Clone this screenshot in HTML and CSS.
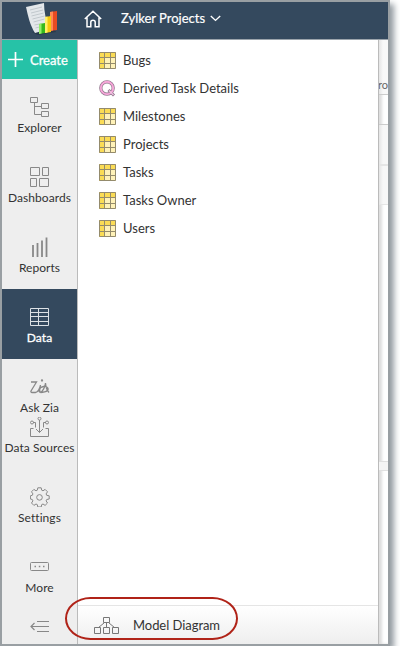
FILE: index.html
```
<!DOCTYPE html>
<html lang="en">

<head>
    <meta charset="utf-8">
    <meta name="viewport" content="width=device-width, initial-scale=1.0">
    <title>Zylker Projects</title>
    <link rel="stylesheet" href="styles.css">
</head>

<body>
    <!-- shared icon for the table rows -->
    <svg class="symbols" width="0" height="0">
        <symbol id="table" viewBox="0 0 17 17">
            <path fill="#fff2b8" d="M0 0h17v17H0z" />
            <path fill="#fbdc55" d="M0 0h17v6H0zM0 6h6v11H0z" />
            <path fill="none" stroke="#948b6c" d="M.5 .5h16v16H.5zM5.5 1v15M11.5 1v15M1 5.5h15M1 11.5h15" />
        </symbol>
    </svg>

    <div class="window">
        <header class="topbar">
            <svg class="logo" width="34" height="34" viewBox="0 0 34 34">
                <path fill="#1f3040" opacity=".6" d="M7 29l6 3 18-3-2-4z" />
                <path fill="#e3e7ea" d="M1 4L19 0c0 9 2 17 5 26L10 30C5 22 3 13 1 4z" />
                <path fill="none" stroke="#b9c0c5" stroke-width=".8" d="M5 7l12-3M6 10l12-3M6.500 13l12-3M7.500 16l12-3M8.500 19l11-3M9.500 22l5-1M10.500 25l4-1" />
                <path fill="#e94b22" d="M25 9l7-1v19l-7 1z" />
                <path fill="#ff8a55" d="M25 9l3-.5v19L25 28z" />
                <path fill="#f5c80e" d="M20 14l6-1v16l-6 1z" />
                <path fill="#fff06a" d="M20 14l2.500-.4v16L20 30z" />
                <path fill="#35b91c" d="M14 21l6-1v10l-6 1z" />
                <path fill="#93ed6a" d="M14 21l2.500-.4v10L14 31z" />
            </svg>
            <svg class="home" width="18" height="18" viewBox="0 0 18 18">
                <path d="M.8 9L9 1.200 17.200 9M3 7.500v9.200h3.800v-4.500c0-2.500 4.400-2.500 4.400 0v4.500H15V7.500" />
            </svg>
            <span class="project">Zylker Projects</span>
            <svg class="arrow" width="11" height="7" viewBox="0 0 11 7">
                <path d="M.8 .9l4.700 4.500L10.200 .9" />
            </svg>
        </header>

        <div class="main">
            <nav class="sidebar">
                <button class="create">
                    <svg width="15" height="15" viewBox="0 0 15 15"><path d="M7.500 0v15M0 7.500h15" /></svg>
                    <span>Create</span>
                </button>
                <a class="item">
                    <svg viewBox="0 0 20 20"><path d="M.5 .5h7v5h-7zM11.500 6.500h7v5h-7zM11.500 14.500h7v5h-7zM4.500 6v11.500h7M4.500 9.500h7" /></svg>
                    <span>Explorer</span>
                </a>
                <a class="item">
                    <svg viewBox="0 0 20 20"><path d="M.5 .5h9v8h-9zM12.500 .5h6v8h-6zM.5 11.500h6v8h-6zM9.500 11.500h9v8h-9z" /></svg>
                    <span>Dashboards</span>
                </a>
                <a class="item reports">
                    <svg viewBox="0 0 20 20"><path d="M3 8v12M7.500 6v14M12 3.500V20M16.500 .5V20" /></svg>
                    <span>Reports</span>
                </a>
                <a class="item selected">
                    <svg viewBox="0 0 20 20"><path d="M.5 1.500h18v17h-18zM.5 5.500h18M.5 9.500h18M.5 14.500h18M8.500 1.500v17" /></svg>
                    <span>Data</span>
                </a>
                <a class="item short">
                    <svg class="zia" viewBox="0 0 20 20"><path d="M1 5H6.500L1 14c-.4 1 .3 1.500 1 1.500H5.500C8 15.500 10 11 10.500 8c-.5 3-1.500 5.500-.3 7 1.800 1 5.300-5.500 5.300-9 .3 4 1 7 3.500 9.500M10.500 15.500c-3-1-1-5.500 3-6 3-.3 5 1.500 4.500 3-1 3-4.500 2.500-7.500 3" /><circle cx="12" cy="3.500" r=".5" /></svg>
                    <span>Ask Zia</span>
                </a>
                <a class="item">
                    <svg viewBox="0 0 20 20"><path d="M3.500 11.500H.5v8h18v-8h-3M9.500 3v12.500M6 12l3.500 3.500L13 12M3 5.500h2.500v5M16 5.500h-2.500v5" /><circle cx="9.500" cy="1.600" r="1.500" /><circle cx="2" cy="5.500" r="1.500" /><circle cx="17" cy="5.500" r="1.500" /></svg>
                    <span>Data Sources</span>
                </a>
                <a class="item">
                    <svg viewBox="0 0 20 20"><path d="M7.800 .8h3.400l.5 2.400 1.300.6 2.100-1.400 2.400 2.400-1.400 2.100.6 1.400 2.500.5v3.200l-2.500.5-.6 1.400 1.400 2.100-2.400 2.400-2.100-1.400-1.300.6-.5 2.400H7.800l-.5-2.400-1.300-.6-2.100 1.400-2.400-2.400 1.400-2.100-.6-1.400L.4 12V8.800l1.900-.5.6-1.400-1.400-2.100 2.400-2.400L6 3.800l1.300-.6z" /><circle cx="9.500" cy="10.400" r="2.800" /></svg>
                    <span>Settings</span>
                </a>
                <a class="item">
                    <svg viewBox="0 0 20 20"><rect x=".5" y="5.500" width="18" height="8" rx="1" /><path class="dots" d="M4.500 9.500h1.500M8.800 9.500h1.500M13 9.500h1.500" /></svg>
                    <span>More</span>
                </a>
                <a class="collapse">
                    <svg width="20" height="14" viewBox="0 0 20 14"><path d="M7 1.500h12M1 6.500h18M7 11.500h12M4.500 3L1 6.500 4.500 10" /></svg>
                </a>
            </nav>

            <section class="panel">
                <ul class="tables">
                    <li><svg><use href="#table" /></svg><span>Bugs</span></li>
                    <li class="query">
                        <svg viewBox="0 0 17 17">
                            <circle cx="8" cy="8" r="6.200" stroke="#8c7288" stroke-width="3.200" />
                            <path stroke="#8c7288" stroke-width="2.800" d="M9.500 10l5.500 5.500" />
                            <circle cx="8" cy="8" r="6.200" stroke="#f5a6d8" stroke-width="2" />
                            <path stroke="#f5c6e4" stroke-width="1.200" d="M10 10.500l4.500 4.500" />
                        </svg>
                        <span>Derived Task Details</span>
                    </li>
                    <li><svg><use href="#table" /></svg><span>Milestones</span></li>
                    <li><svg><use href="#table" /></svg><span>Projects</span></li>
                    <li><svg><use href="#table" /></svg><span>Tasks</span></li>
                    <li><svg><use href="#table" /></svg><span>Tasks Owner</span></li>
                    <li><svg><use href="#table" /></svg><span>Users</span></li>
                </ul>
                <div class="model">
                    <svg width="26" height="17" viewBox="0 0 26 17"><path d="M9.500 .5h6v5h-6zM.5 10.500h6v6h-6zM9.500 10.500h6v6h-6zM18.500 10.500h6v6h-6zM12.500 6v4M10 6l-5.500 4.500M15 6l5.500 4.500" /></svg>
                    <span>Model Diagram</span>
                </div>
            </section>

            <!-- page behind the panel -->
            <aside class="behind">
                <div class="heading">ro</div>
                <div class="field"></div>
                <div class="tools"></div>
                <div class="columns"></div>
                <div class="rows"></div>
                <div class="splitter"></div>
            </aside>
        </div>
        <div class="highlight"></div>
    </div>
</body>

</html>
```
FILE: styles.css
```
* {
    box-sizing: border-box;
}

body {
    margin: 0;
    background-color: #fff;
    font-family: Lato, "Liberation Sans", sans-serif;
    font-size: 13px;
    font-variant-ligatures: none;
    color: #333;
}

svg {
    flex: none;
    fill: none;
}

.symbols {
    position: absolute;
}

.window {
    position: relative;
    display: flex;
    flex-direction: column;
    width: 390px;
    height: 646px;
    border: 2px solid #999fa3;
    box-shadow: 4px 4px 6px #939ba1;
}

.topbar {
    display: flex;
    align-items: center;
    height: 38px;
    background-color: #34495e;
    border-bottom: 1px solid #9ba4ac;
    color: #fff;
}

.logo {
    margin-left: 23px;
    margin-top: -2px;
}

.home {
    margin-left: 25px;
    margin-top: -4px;
    stroke: #fff;
    stroke-width: 1.5;
}

.project {
    width: 84px;
    margin-left: 19px;
    margin-top: -5px;
    white-space: nowrap;
    -webkit-text-stroke: .2px;
}

.arrow {
    margin-left: 5px;
    margin-top: -4px;
    stroke: #fff;
    stroke-width: 1.4;
}

.main {
    display: flex;
    flex: 1;
}

.sidebar {
    width: 76px;
    background-color: #eee;
    border-right: 1px solid #bbb;
}

.create {
    display: flex;
    align-items: center;
    gap: 7px;
    width: 75px;
    height: 39px;
    padding: 0 0 0 6px;
    border: 0;
    background-color: #26c2a7;
    color: #fff;
    font: inherit;
    -webkit-text-stroke: .3px;
}

.create svg {
    stroke: #fff;
    stroke-width: 1.7;
}

.item {
    display: flex;
    flex-direction: column;
    align-items: center;
    gap: 3px;
    height: 70px;
    padding-top: 18px;
    font-size: 12px;
    line-height: 16px;
    letter-spacing: .05px;
    white-space: nowrap;
}

.item svg {
    width: 20px;
    height: 20px;
    stroke: #888;
}

.reports svg {
    stroke-width: 1.8;
}

.item .zia {
    stroke-width: 1.3;
}

.selected {
    background-color: #34495e;
    color: #fff;
    -webkit-text-stroke: .3px;
}

.selected svg {
    stroke: #dce1e5;
}

.short {
    height: 40px;
}

.dots {
    stroke-width: 1.7;
}

.collapse {
    display: flex;
    justify-content: center;
    padding-top: 11px;
}

.collapse svg {
    stroke: #888;
    stroke-width: 1.2;
}

.panel {
    display: flex;
    flex-direction: column;
    width: 301px;
    background-color: #fff;
    border-right: 1px solid #bbb;
}

.tables {
    flex: 1;
    margin: 0;
    padding: 6px 0 0 21px;
    list-style: none;
}

.tables li {
    display: flex;
    align-items: center;
    gap: 7px;
    height: 28px;
}

.tables svg {
    width: 17px;
    height: 17px;
}

.model {
    display: flex;
    align-items: center;
    gap: 13px;
    height: 39px;
    padding-left: 16px;
    border-top: 1px solid #e5e5e5;
    background: linear-gradient(#fff, #eee);
    letter-spacing: -.05px;
}

.model svg {
    stroke: #777;
}

.behind {
    flex: 1;
    overflow: hidden;
    background-color: #fff;
    box-shadow: inset 3px 0 3px #ddd;
}

.heading {
    display: flex;
    justify-content: flex-end;
    height: 55px;
    padding-top: 37px;
    border-bottom: 1px solid #ccc;
    background: linear-gradient(to right, #e4e4e4, #f8f8f8 4px);
    font-size: 11px;
    line-height: 15px;
    color: #666;
}

.field {
    height: 30px;
    border-bottom: 1px solid #ccc;
}

.tools,
.columns {
    height: 41px;
    border-bottom: 2px solid #e5e5e5;
    background: linear-gradient(to right, #e4e4e4, #f7f7f7 4px);
}

.columns {
    height: 39px;
    border-bottom-width: 1px;
}

.rows {
    height: 256px;
}

.splitter {
    height: 10px;
    border: 1px solid #e0e0e0;
    border-width: 1px 0;
    background-color: #f5f5f5;
}

/* red outline drawn over the model diagram link */
.highlight {
    position: absolute;
    left: 63px;
    top: 595px;
    width: 173px;
    height: 43px;
    border: 2px solid #b02318;
    border-radius: 26px / 22px;
}
```
